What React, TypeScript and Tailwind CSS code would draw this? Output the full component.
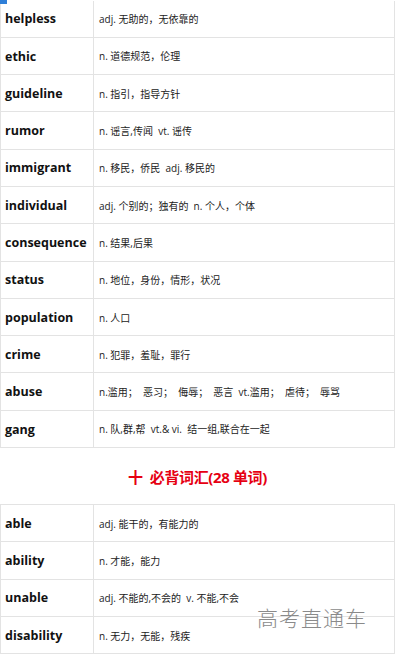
import React from 'react';

type Word = { en: string; cn: string };

const listA: Word[] = [
  { en: 'helpless', cn: 'adj. 无助的，无依靠的' },
  { en: 'ethic', cn: 'n. 道德规范，伦理' },
  { en: 'guideline', cn: 'n. 指引，指导方针' },
  { en: 'rumor', cn: 'n. 谣言,传闻  vt. 谣传' },
  { en: 'immigrant', cn: 'n. 移民，侨民  adj. 移民的' },
  { en: 'individual', cn: 'adj. 个别的；独有的  n. 个人，个体' },
  { en: 'consequence', cn: 'n. 结果,后果' },
  { en: 'status', cn: 'n. 地位，身份，情形，状况' },
  { en: 'population', cn: 'n. 人口' },
  { en: 'crime', cn: 'n. 犯罪，羞耻，罪行' },
  { en: 'abuse', cn: 'n.滥用；  恶习；  侮辱；  恶言  vt.滥用；  虐待；  辱骂' },
  { en: 'gang', cn: 'n. 队,群,帮  vt.& vi.  结一组,联合在一起' },
];

const listB: Word[] = [
  { en: 'able', cn: 'adj. 能干的，有能力的' },
  { en: 'ability', cn: 'n. 才能，能力' },
  { en: 'unable', cn: 'adj. 不能的,不会的  v. 不能,不会' },
  { en: 'disability', cn: 'n. 无力，无能，残疾' },
];

const font = { fontFamily: '"Open Sans", "Noto Sans CJK SC", sans-serif' };

const WordTable: React.FC<{ words: Word[]; top?: boolean }> = ({ words, top }) => (
  <div className={`border-l border-r border-[#e3e3e3] ${top ? 'border-t' : ''}`}>
    {words.map((w) => (
      <div key={w.en} className="flex h-[37.3px] border-b border-[#e3e3e3] box-border">
        <div className="w-[93px] shrink-0 border-r border-[#e3e3e3] flex items-center pl-[4px] pt-[2px] text-[12.5px] font-bold text-[#111]">
          {w.en}
        </div>
        <div className="flex items-center pl-[5px] pt-[2px] text-[10px] text-[#222] whitespace-pre">
          {w.cn}
        </div>
      </div>
    ))}
  </div>
);

export default function App() {
  return (
    <div className="relative w-[395px] h-[656px] overflow-hidden bg-white" style={font}>
      <div className="absolute left-0 top-0 w-[7px] h-[4px] bg-[#2f7fd8] z-10" />
      <div className="mt-[0.5px]">
        <WordTable words={listA} />
      </div>
      <div className="h-[56px] pt-[3px] flex items-center justify-center text-[15px] font-bold text-[#e60012] tracking-tight">
        十&nbsp;&nbsp;必背词汇(28 单词)
      </div>
      <WordTable words={listB} top />
      <div
        className="absolute left-[257px] top-[602px] text-[21px] text-[#8a8a8a] tracking-[1px]"
        style={{ fontFamily: '"Noto Sans CJK SC", sans-serif', fontWeight: 300 }}
      >
        高考直通车
      </div>
    </div>
  );
}
